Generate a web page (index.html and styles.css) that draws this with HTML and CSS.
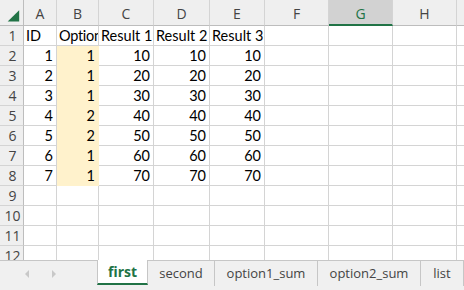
FILE: index.html
```html
<!DOCTYPE html>
<html lang="en">
<head>
    <meta charset="UTF-8">
    <title>Book1 - first</title>
    <link rel="stylesheet" href="styles.css">
</head>
<body>
    <div class="sheet" id="sheet"></div>

    <div class="tabbar">
        <div class="nav">
            <span class="arrow left"></span>
            <span class="arrow right"></span>
        </div>
        <div class="tab tab-first active">first</div>
        <div class="tab tab-second">second</div>
        <div class="tab tab-sum">option1_sum</div>
        <div class="tab tab-sum">option2_sum</div>
        <div class="tab tab-list">list</div>
    </div>

    <script>
        // column letters and the data that sits in A1:E8
        const cols = ['A', 'B', 'C', 'D', 'E', 'F', 'G', 'H', ''];
        const data = [
            ['ID', 'Option', 'Result 1', 'Result 2', 'Result 3'],
            [1, 1, 10, 10, 10],
            [2, 1, 20, 20, 20],
            [3, 1, 30, 30, 30],
            [4, 2, 40, 40, 40],
            [5, 2, 50, 50, 50],
            [6, 1, 60, 60, 60],
            [7, 1, 70, 70, 70]
        ];

        function cell(cls, text) {
            const div = document.createElement('div');
            div.className = cls;
            if (text !== undefined) div.textContent = text;
            return div;
        }

        function buildSheet() {
            const sheet = document.getElementById('sheet');

            // header row
            const corner = cell('hdr corner');
            corner.innerHTML = '<svg width="24" height="26" viewBox="0 0 24 26"><polygon points="8,22 20,22 20,10" fill="#217346"/></svg>';
            sheet.appendChild(corner);
            cols.forEach(c => {
                sheet.appendChild(cell(c === 'G' ? 'hdr col selected' : 'hdr col', c));
            });

            // rows 1..12
            for (let r = 1; r <= 12; r++) {
                sheet.appendChild(cell('hdr row', r));
                const values = data[r - 1] || [];
                cols.forEach((c, i) => {
                    let cls = 'cell';
                    const v = values[i];
                    if (typeof v === 'number') cls += ' num';
                    if (c === 'B' && r > 1 && r <= 8) cls += ' fill';
                    if (r === 1 && i === 1) cls += ' clip';
                    sheet.appendChild(cell(cls, v === undefined ? '' : v));
                });
            }
        }

        buildSheet();
    </script>
</body>
</html>
```

FILE: styles.css
```css
body {
    margin: 0;
    width: 464px;
    height: 290px;
    overflow: hidden;
    background-color: white;
    font-family: 'Lato', 'Liberation Sans', sans-serif;
    font-size: 14.5px;
    color: #000;
}
.sheet {
    display: grid;
    grid-template-columns: 24px 33px 42px 55px 56px 55px 64px 64px 64px 64px;
    grid-template-rows: 26px repeat(12, 20px);
    height: 260px;
    overflow: hidden;
}
.hdr {
    background-color: #efefef;
    color: #444;
    font-family: 'Open Sans', 'Liberation Sans', sans-serif;
    font-size: 14px;
    box-sizing: border-box;
    display: flex;
    align-items: center;
    justify-content: center;
}
.corner {
    border-right: 1px solid #bdbdbd;
    border-bottom: 1px solid #bdbdbd;
}
.col {
    border-right: 1px solid #d4d4d4;
    border-bottom: 1px solid #bdbdbd;
    padding-top: 2px;
}
.col.selected {
    background-color: #d2d2d2;
    border-bottom: 2px solid #217346;
    color: #217346;
}
.row {
    border-right: 1px solid #bdbdbd;
    border-bottom: 1px solid #d4d4d4;
    padding-left: 2px;
}
.cell {
    box-sizing: border-box;
    border-right: 1px solid #d4d4d4;
    border-bottom: 1px solid #d4d4d4;
    padding: 0 3px 0 2px;
    line-height: 20px;
    white-space: nowrap;
    overflow: visible;
    position: relative;
}
.cell.num {
    text-align: right;
}
.cell.fill {
    background-color: #fff2cc;
    border-right-color: #fff2cc;
    border-bottom-color: #fff2cc;
}
.cell.clip {
    overflow: hidden;
    letter-spacing: -0.3px;
}
.tabbar {
    height: 30px;
    box-sizing: border-box;
    background-color: #f0f0f0;
    border-top: 1px solid #c6c6c6;
    display: flex;
    align-items: flex-start;
    font-family: 'Open Sans', 'Liberation Sans', sans-serif;
    font-size: 13px;
    color: #444;
}
.nav {
    flex: 0 0 97px;
    height: 25px;
    display: flex;
    align-items: center;
    gap: 23px;
    padding-left: 25px;
    box-sizing: border-box;
}
.arrow {
    width: 0;
    height: 0;
    border-top: 4px solid transparent;
    border-bottom: 4px solid transparent;
}
.arrow.left {
    border-right: 4px solid #c8c8c8;
}
.arrow.right {
    border-left: 4px solid #c8c8c8;
}
.tab {
    flex: 0 0 auto;
    box-sizing: border-box;
    height: 25px;
    line-height: 24px;
    text-align: center;
    border-right: 1px solid #c6c6c6;
}
.tab-first {
    width: 51px;
}
.tab-second {
    width: 67px;
}
.tab-sum {
    width: 103px;
}
.tab-list {
    width: 43px;
}
.tab.active {
    background-color: white;
    color: #217346;
    font-weight: bold;
    border-left: 1px solid #c6c6c6;
    border-bottom: 2px solid #217346;
    margin-top: -1px;
    height: 25px;
    font-size: 14px;
}
```
